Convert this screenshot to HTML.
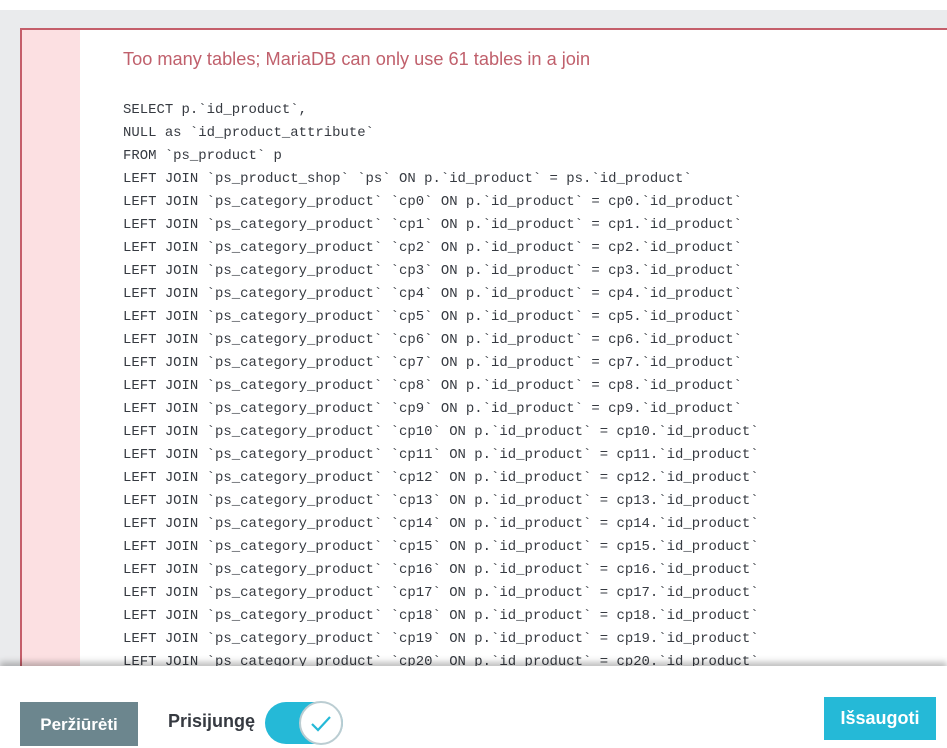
<!DOCTYPE html>
<html><head><style>
*{margin:0;padding:0;box-sizing:border-box}
body{width:947px;height:748px;overflow:hidden;background:#fff;position:relative;font-family:"Liberation Sans",sans-serif}
.gray{position:absolute;left:0;top:10px;width:947px;height:660px;background:#eaebed}
.card{position:absolute;left:20px;top:28px;width:940px;height:700px;border:2px solid #c45e6a;background:#fff}
.strip{position:absolute;left:0;top:0;width:58px;height:100%;background:#fce0e2}
.title{position:absolute;left:101px;top:19px;font-size:18.2px;color:#c0606c;white-space:nowrap}
pre{position:absolute;left:101px;top:69px;font-family:"Liberation Mono",monospace;font-size:13.95px;line-height:23px;color:#363a41}
.footer{position:absolute;left:0;top:666px;width:947px;height:82px;background:#fff;box-shadow:0 -4px 6px rgba(0,0,0,.25)}
.b1{position:absolute;left:20px;top:36px;width:118px;height:44px;background:#6c868e;color:#fff;font-weight:bold;font-size:17px;line-height:46px;text-align:center}
.lbl{position:absolute;left:168px;top:45px;font-weight:bold;font-size:18px;color:#363a41}
.tog{position:absolute;left:265px;top:36px;width:78px;height:42px;border-radius:21px;background:#25b9d7}
.knob{position:absolute;left:34px;top:-1px;width:44px;height:44px;border-radius:50%;background:#fff;border:2px solid #bbcdd2}
.b2{position:absolute;left:824px;top:31px;width:112px;height:43px;background:#25b9d7;color:#fff;font-weight:bold;font-size:18px;line-height:43px;text-align:center}
</style></head><body>
<div class="gray"></div>
<div class="card"><div class="strip"></div>
<div class="title">Too many tables; MariaDB can only use 61 tables in a join</div>
<pre>SELECT p.`id_product`,
NULL as `id_product_attribute`
FROM `ps_product` p
LEFT JOIN `ps_product_shop` `ps` ON p.`id_product` = ps.`id_product`
LEFT JOIN `ps_category_product` `cp0` ON p.`id_product` = cp0.`id_product`
LEFT JOIN `ps_category_product` `cp1` ON p.`id_product` = cp1.`id_product`
LEFT JOIN `ps_category_product` `cp2` ON p.`id_product` = cp2.`id_product`
LEFT JOIN `ps_category_product` `cp3` ON p.`id_product` = cp3.`id_product`
LEFT JOIN `ps_category_product` `cp4` ON p.`id_product` = cp4.`id_product`
LEFT JOIN `ps_category_product` `cp5` ON p.`id_product` = cp5.`id_product`
LEFT JOIN `ps_category_product` `cp6` ON p.`id_product` = cp6.`id_product`
LEFT JOIN `ps_category_product` `cp7` ON p.`id_product` = cp7.`id_product`
LEFT JOIN `ps_category_product` `cp8` ON p.`id_product` = cp8.`id_product`
LEFT JOIN `ps_category_product` `cp9` ON p.`id_product` = cp9.`id_product`
LEFT JOIN `ps_category_product` `cp10` ON p.`id_product` = cp10.`id_product`
LEFT JOIN `ps_category_product` `cp11` ON p.`id_product` = cp11.`id_product`
LEFT JOIN `ps_category_product` `cp12` ON p.`id_product` = cp12.`id_product`
LEFT JOIN `ps_category_product` `cp13` ON p.`id_product` = cp13.`id_product`
LEFT JOIN `ps_category_product` `cp14` ON p.`id_product` = cp14.`id_product`
LEFT JOIN `ps_category_product` `cp15` ON p.`id_product` = cp15.`id_product`
LEFT JOIN `ps_category_product` `cp16` ON p.`id_product` = cp16.`id_product`
LEFT JOIN `ps_category_product` `cp17` ON p.`id_product` = cp17.`id_product`
LEFT JOIN `ps_category_product` `cp18` ON p.`id_product` = cp18.`id_product`
LEFT JOIN `ps_category_product` `cp19` ON p.`id_product` = cp19.`id_product`
LEFT JOIN `ps_category_product` `cp20` ON p.`id_product` = cp20.`id_product`</pre>
</div>
<div class="footer">
<div class="b1">Peržiūrėti</div>
<div class="lbl">Prisijungę</div>
<div class="tog"><div class="knob"><svg width="40" height="40" viewBox="0 0 40 40" style="position:absolute;left:0;top:0"><path d="M11 21 L17 27 L29 14" fill="none" stroke="#25b9d7" stroke-width="2.2"/></svg></div></div>
<div class="b2">Išsaugoti</div>
</div>
</body></html>
